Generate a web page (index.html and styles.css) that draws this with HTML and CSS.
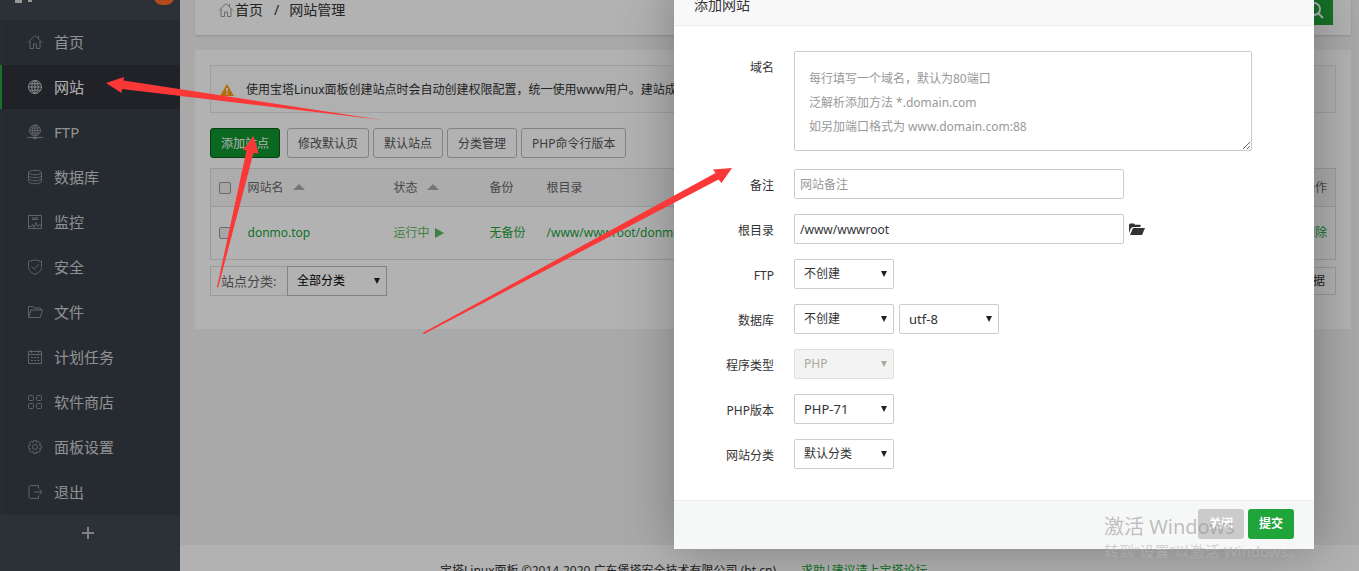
FILE: index.html
```html
<!DOCTYPE html>
<html lang="zh-CN">
<head>
<meta charset="utf-8">
<title>网站管理</title>
<link rel="stylesheet" href="styles.css">
</head>
<body>
<div class="app">
  <aside class="sidebar">
    <div class="brand"><span class="brand-mark"></span><span class="brand-mark small"></span><span class="badge"></span></div>
    <nav class="menu">
      <a href="#" class="item"><svg viewBox="0 0 16 16"><path d="M1 8.500 8 1.500l7 7M3 7v7.500h3.500V10h3v4.500H13V7M11.500 2v2.500"/></svg>首页</a>
      <a href="#" class="item active"><svg viewBox="0 0 16 16"><circle cx="8" cy="8" r="6.500"/><ellipse cx="8" cy="8" rx="3.200" ry="6.500"/><path d="M8 1.500v13M1.500 8h13M2.500 4.800h11M2.500 11.200h11"/></svg>网站</a>
      <a href="#" class="item"><svg viewBox="0 0 16 16"><circle cx="8" cy="6.500" r="5.500"/><ellipse cx="8" cy="6.500" rx="2.700" ry="5.500"/><path d="M8 1v11M2.500 6.500h11M3.300 4h9.400M3.300 9h9.400M0 13.500h16M6 14.500h4"/></svg>FTP</a>
      <a href="#" class="item"><svg viewBox="0 0 16 16"><ellipse cx="8" cy="3.500" rx="6.500" ry="2.200"/><path d="M1.500 3.500v9c0 1.200 3 2.200 6.500 2.200s6.500-1 6.500-2.200v-9M1.500 6.500c0 1.200 3 2.200 6.500 2.200s6.500-1 6.500-2.200M1.500 9.500c0 1.200 3 2.200 6.500 2.200s6.500-1 6.500-2.200"/></svg>数据库</a>
      <a href="#" class="item"><svg viewBox="0 0 16 16"><path d="M1.500 1.500h13v13h-13zM5 4h6M5 5.500h6M2 12.500h2l1.500-2L7 13.500l2-5 1.500 4 1-1.500H14"/></svg>监控</a>
      <a href="#" class="item"><svg viewBox="0 0 16 16"><path d="M8 .8 14.500 2.500v6c0 3-3 5.500-6.500 6.900C4.500 14 1.500 11.500 1.500 8.500v-6zM4.500 7.500l2.700 2.800 4.500-5"/></svg>安全</a>
      <a href="#" class="item"><svg viewBox="0 0 16 16"><path d="M1.500 13V2.500H6l1 1.500h6.500v2M1.500 13.500 4 6h11.500l-2.300 7.500z"/></svg>文件</a>
      <a href="#" class="item"><svg viewBox="0 0 16 16"><path d="M1.500 2.500h13v12h-13zM1.500 5.500h13M4.500 1v3M11.500 1v3M4 8.500h2M7 8.500h2M10 8.500h2M4 11.500h2M7 11.500h2M10 11.500h2"/></svg>计划任务</a>
      <a href="#" class="item"><svg viewBox="0 0 16 16"><rect x="1.500" y="1.500" width="5" height="5" rx="1"/><rect x="9.500" y="1.500" width="5" height="5" rx="1"/><rect x="1.500" y="9.500" width="5" height="5" rx="1"/><rect x="9.500" y="9.500" width="5" height="5" rx="1"/></svg>软件商店</a>
      <a href="#" class="item"><svg viewBox="0 0 16 16"><circle cx="8" cy="8" r="2.500"/><path d="M6.800 1.500h2.400l.5 1.800 2-.9 1.700 1.700-.9 2 1.800.6v2.500l-1.800.6.9 2-1.700 1.700-2-.9-.5 1.900H6.800l-.6-1.900-2 .9-1.700-1.700.9-2-1.800-.6V6.700l1.800-.6-.9-2 1.700-1.700 2 .9z"/></svg>面板设置</a>
      <a href="#" class="item"><svg viewBox="0 0 16 16"><path d="M11.500 4.500v-3H3l-1 1v11l1 1h8.500v-3M7 8h8M12.500 5.500 15 8l-2.500 2.500"/></svg>退出</a>
    </nav>
    <button class="add-menu" type="button" aria-label="添加"><svg viewBox="0 0 14 14"><path d="M7 1v12M1 7h12"/></svg></button>
  </aside>

  <div class="page">
    <header class="topbar">
      <nav class="crumbs">
        <svg class="home" viewBox="0 0 16 16"><path d="M1 8.500 8 1.500l7 7M3 7v7.500h3.500V10h3v4.500H13V7M11.500 2v2.500"/></svg>
        <a href="#">首页</a><span class="slash">/</span><span>网站管理</span>
      </nav>
      <button class="search" type="button" aria-label="搜索"><svg viewBox="0 0 20 20"><circle cx="9" cy="9" r="6"/><path d="m13.500 13.500 4.500 4.500"/></svg></button>
    </header>

    <main class="card">
      <div class="notice">
        <svg class="warn" viewBox="0 0 14 12"><path d="M7 0 14 12H0z"/><path class="mark" d="M6 4h2l-.4 4H6.400zM6.200 9h1.600v1.600H6.200z"/></svg>
        <span>使用宝塔Linux面板创建站点时会自动创建权限配置，统一使用www用户。建站成功后</span>
      </div>
      <div class="toolbar">
        <button type="button" class="btn primary">添加站点</button>
        <button type="button" class="btn">修改默认页</button>
        <button type="button" class="btn">默认站点</button>
        <button type="button" class="btn">分类管理</button>
        <button type="button" class="btn">PHP命令行版本</button>
      </div>
      <table class="sites">
        <thead>
          <tr>
            <th class="c-check"><input type="checkbox" aria-label="全选"></th>
            <th class="c-name">网站名<i class="sort"></i></th>
            <th class="c-state">状态<i class="sort"></i></th>
            <th class="c-backup">备份</th>
            <th>根目录</th>
            <th class="c-op">操作</th>
          </tr>
        </thead>
        <tbody>
          <tr>
            <td><input type="checkbox" aria-label="donmo.top"></td>
            <td><a href="#">donmo.top</a></td>
            <td><a href="#" class="running">运行中<i class="play"></i></a></td>
            <td><a href="#">无备份</a></td>
            <td><a href="#">/www/wwwroot/donmo.top</a></td>
            <td class="c-op"><a href="#">删除</a></td>
          </tr>
        </tbody>
      </table>
      <div class="filter">
        <label for="cat" class="filter-label">站点分类:</label>
        <span class="pick"><select id="cat"><option>全部分类</option></select></span>
        <span class="total">共1条数据</span>
      </div>
    </main>

    <footer class="footer"><span>宝塔Linux面板 ©2014-2020 广东堡塔安全技术有限公司 (bt.cn)</span><a href="#">求助|建议请上宝塔论坛</a></footer>
  </div>
</div>

<div class="shade"></div>

<form class="dialog">
  <h2 class="dialog-title">添加网站</h2>
  <div class="fields">
    <label for="domain">域名</label>
    <textarea id="domain" placeholder="每行填写一个域名，默认为80端口
泛解析添加方法 *.domain.com
如另加端口格式为 www.domain.com:88"></textarea>
    <label for="note">备注</label>
    <input id="note" class="text" type="text" placeholder="网站备注">
    <label for="root">根目录</label>
    <div class="line"><input id="root" class="text" type="text" value="/www/wwwroot">
      <svg class="folder" viewBox="0 0 16 12"><path d="M0 10V1.500L1 .5h4l1 1.200h5.500V4H4L2 5z"/><path d="M4 5h12l-3 7H1z"/></svg></div>
    <label for="ftp">FTP</label>
    <span class="pick"><select id="ftp"><option>不创建</option></select></span>
    <label for="db">数据库</label>
    <div class="line"><span class="pick"><select id="db"><option>不创建</option></select></span><span class="pick"><select class="latin" aria-label="编码"><option>utf-8</option></select></span></div>
    <label for="type">程序类型</label>
    <span class="pick off"><select id="type" disabled><option>PHP</option></select></span>
    <label for="php">PHP版本</label>
    <span class="pick"><select id="php" class="latin"><option>PHP-71</option></select></span>
    <label for="sort">网站分类</label>
    <span class="pick"><select id="sort"><option>默认分类</option></select></span>
  </div>
  <div class="actions">
    <button type="button" class="act close">关闭</button>
    <button type="button" class="act submit">提交</button>
  </div>
</form>

<div class="watermark"><p class="wm-title">激活 Windows</p><p class="wm-text">转到“设置”以激活 Windows。</p></div>

<svg class="arrows" width="1359" height="571" viewBox="0 0 1359 571">
  <path d="M106 83 124 77 123.500 80.500 382 120 122 89 121.500 93z"/>
  <path d="M253.500 136 258.500 153.500 253.500 153 218 288 217 287 246.500 150.500 243 150z"/>
  <path d="M732 168 721.500 183 718.500 179.500 424 334 422.500 333 715.500 173 713 169.500z"/>
</svg>
</body>
</html>
```
FILE: styles.css
```css
* { box-sizing: border-box; }

body {
  margin: 0;
  height: 100vh;
  overflow: hidden;
  position: relative;
  background: #f2f2f2;
  color: #333;
  font: 12px/20px "Noto Sans", "Noto Sans CJK SC", sans-serif;
}

a { color: #20a53a; text-decoration: none; }
button, input, select, textarea { font: inherit; color: inherit; margin: 0; }
svg { fill: none; stroke: currentColor; }

.app { display: flex; height: 100vh; }

/* Sidebar */
.sidebar {
  width: 180px;
  flex: none;
  display: flex;
  flex-direction: column;
  background: #3f464f;
}
.brand { height: 20px; display: flex; align-items: flex-start; padding-left: 15px; gap: 6px; overflow: hidden; }
.brand-mark { width: 7px; height: 3px; background: #d8d8d8; }
.brand-mark.small { width: 4px; height: 2px; }
.badge { width: 20px; height: 18px; margin: -13px 6px 0 auto; border-radius: 8px; background: #ff6c24; }
.menu { display: flex; flex-direction: column; background: #373e47; border-left: 2px solid #3c4045; }
.item {
  display: flex;
  align-items: center;
  gap: 11px;
  height: 45px;
  padding: 0 0 2px 25px;
  color: #cfd0d1;
  font-size: 15px;
}
.item svg { width: 16px; height: 16px; color: #8b8f94; }
.item.active { height: 44px; margin: 0 0 1px -2px; padding-bottom: 0; border-left: 2px solid #20a53a; background: #2e3238; color: #fff; }
.item.active svg { color: #c8c9ca; }
.add-menu { height: 42px; padding: 0; border: 0; background: none; color: #b5b8bb; }
.add-menu svg { width: 14px; height: 14px; stroke-width: 2; margin-right: 5px; }

/* Page */
.page { flex: 1; min-width: 0; display: flex; flex-direction: column; }
.topbar {
  display: flex;
  justify-content: space-between;
  height: 35px;
  margin: 0 8px 15px 15px;
  padding: 0 18px 0 23px;
  background: #fff;
  box-shadow: 0 1px 2px rgba(0, 0, 0, .15);
}
.crumbs { display: flex; align-items: center; height: 20px; font-size: 14px; }
.crumbs a { color: inherit; }
.home { width: 16px; height: 16px; margin-right: 1px; color: #999; }
.slash { padding: 0 10px 0 11px; }
.search { width: 36px; height: 25px; padding: 0; border: 0; background: #20a53a; color: #fff; }
.search svg { width: 20px; height: 20px; stroke-width: 2; }

.card { margin: 0 8px 0 15px; padding: 15px 15px 33px; background: #fff; }
.notice {
  display: flex;
  align-items: center;
  gap: 12px;
  height: 48px;
  padding: 2px 9px 0;
  border: 1px solid #e6e6e6;
  background: #fcfcfc;
  white-space: nowrap;
  overflow: hidden;
}
.warn { width: 14px; height: 12px; fill: #ff9f12; stroke: none; }
.warn .mark { fill: #fff; }
.toolbar { display: flex; gap: 4px; margin: 15px 0 10px; }
.btn {
  height: 30px;
  padding: 2px 9px 0;
  border: 1px solid #bbb;
  border-radius: 3px;
  background: #fff;
  color: #555;
  white-space: nowrap;
  min-width: 70px;
}
.btn:nth-child(2) { min-width: 82px; }
.btn:last-child { padding: 2px 10px 0; }
.btn.primary { margin-right: 3px; border-color: #0a5b19; background: #109530; color: #fff; }

.sites { width: 100%; table-layout: fixed; border-collapse: collapse; border: 1px solid #ddd; }
.sites th, .sites td { padding: 0; border-bottom: 1px solid #ddd; text-align: left; font-weight: normal; white-space: nowrap; }
.sites th { height: 38px; background: #f6f6f6; color: #666; }
.sites td { height: 53px; }
.sites .c-check { width: 37px; }
.c-name { width: 146px; }
.c-state { width: 96px; }
.c-backup { width: 57px; }
.sites .c-op { text-align: right; padding-right: 8px; }
.sites input {
  appearance: none;
  display: block;
  width: 12px;
  height: 12px;
  margin-left: 8px;
  border: 1px solid #999;
  border-radius: 2px;
  background: #eee;
}
.sort { display: inline-block; margin-left: 9px; vertical-align: 2px; border: 6px solid transparent; border-top: 0; border-bottom-color: #aaa; }
.play { display: inline-block; margin-left: 5px; vertical-align: -1px; border: 5px solid transparent; border-left: 9px solid #5cb85c; border-right: 0; }
.running { color: #5cb85c; }
.latin { font-size: 13px; }

.filter { display: flex; align-items: center; margin-top: 6px; }
.filter-label { width: 77px; height: 30px; padding-left: 10px; border: 1px solid #ddd; border-right: 0; font-size: 13px; line-height: 28px; color: #666; white-space: nowrap; }
.total { margin-left: auto; height: 28px; padding: 0 10px; border: 1px solid #ddd; line-height: 26px; }

.footer { display: flex; gap: 25px; height: 26px; margin-top: auto; padding: 16px 0 0 260px; background: #fff; white-space: nowrap; overflow: hidden; }

/* Select box */
.pick { position: relative; display: block; width: 100px; height: 30px; }
.pick select {
  appearance: none;
  width: 100%;
  height: 30px;
  padding: 0 9px;
  border: 1px solid #ccc;
  border-radius: 2px;
  background: #fff;
  color: #333;
}
.pick::after {
  content: "";
  position: absolute;
  top: 12px;
  right: 7px;
  border: 3px solid transparent;
  border-top: 6px solid #222;
  border-bottom: 0;
  pointer-events: none;
}
.filter .pick select { border-color: #bbb; border-radius: 0; color: #000; }
.pick.off select { background: #f3f3f3; border-color: #ddd; color: #aaa89c; opacity: 1; }
.pick.off::after { border-top-color: #aaa89c; }

/* Dialog */
.shade { position: absolute; inset: 0; background: rgba(0, 0, 0, .3); }
.dialog {
  position: absolute;
  top: -17px;
  right: 45px;
  width: 640px;
  background: #fff;
  box-shadow: 1px 1px 50px rgba(0, 0, 0, .3);
}
.dialog-title {
  margin: 0;
  height: 43px;
  padding-left: 20px;
  border-bottom: 1px solid #eee;
  background: #f8f8f8;
  font-size: 14px;
  font-weight: normal;
  line-height: 44px;
}
.fields {
  display: grid;
  grid-template-columns: 100px 1fr;
  column-gap: 20px;
  row-gap: 15px;
  padding: 25px 62px 31px 0;
}
.fields label { padding-top: 7px; text-align: right; }
.fields textarea {
  display: block;
  width: 100%;
  height: 100px;
  margin-bottom: 3px;
  padding: 15px 14px 10px;
  border: 1px solid #ccc;
  border-radius: 2px;
  line-height: 24px;
  resize: vertical;
}
.fields ::placeholder { color: #999; opacity: 1; }
.text { width: 330px; height: 30px; padding: 0 5px; border: 1px solid #ccc; border-radius: 2px; }
.line { display: flex; align-items: center; gap: 5px; }
.folder { width: 16px; height: 12px; fill: #333; stroke: none; }
.actions { display: flex; justify-content: flex-end; gap: 4px; padding: 8px 20px 10px; border-top: 1px solid #e8eeec; background: #f6f8f7; }
.act { width: 46px; height: 30px; padding: 0; border: 0; border-radius: 3px; color: #fff; font-weight: bold; }
.close { background: #cbcbcb; }
.submit { background: #20a53a; }

/* Desktop overlay */
.watermark { position: absolute; left: 1104px; top: 513px; color: rgba(150, 150, 150, .6); white-space: nowrap; pointer-events: none; }
.watermark p { margin: 0; }
.wm-title { font-size: 20px; line-height: 28px; }
.wm-text { font-size: 15px; line-height: 20px; color: rgba(180, 180, 180, .6); }
.arrows { position: absolute; top: 0; left: 0; fill: #fb3838; stroke: none; pointer-events: none; }
```
